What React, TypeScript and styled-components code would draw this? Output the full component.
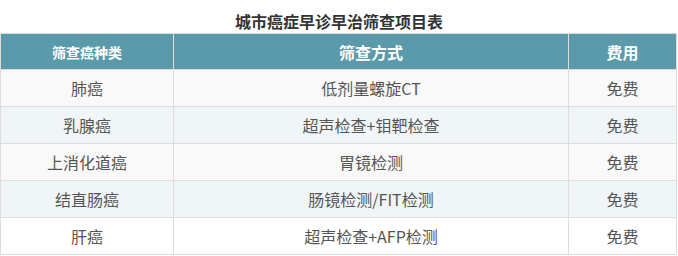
import React from 'react'
import styled, { createGlobalStyle } from 'styled-components'

const GlobalStyle = createGlobalStyle`
  body {
    margin: 0;
    background: #fff;
    font-family: "Noto Sans CJK SC", "Noto Sans", sans-serif;
  }
`

const Wrapper = styled.div`
  width: 678px;
`

const Title = styled.h3`
  margin: 0;
  padding-top: 10px;
  height: 23px;
  line-height: 22px;
  font-size: 16px;
  font-weight: bold;
  color: #333;
  text-align: center;
`

const Table = styled.table`
  width: 677px;
  border-collapse: collapse;
  table-layout: fixed;
`

const HeadCell = styled.th<{ $small?: boolean }>`
  height: 35px;
  padding: 0;
  background: #5a9aab;
  color: #fff;
  font-size: ${p => (p.$small ? '14px' : '16px')};
  font-weight: bold;
  border: 1px solid #dcdcdc;
  text-align: center;
`

const Row = styled.tr<{ $bg: string }>`
  background: ${p => p.$bg};
`

const Cell = styled.td`
  height: 36px;
  padding: 0;
  font-size: 16px;
  color: #555;
  border: 1px solid #dcdcdc;
  text-align: center;
`

const rows = [
  ['肺癌', '低剂量螺旋CT', '免费'],
  ['乳腺癌', '超声检查+钼靶检查', '免费'],
  ['上消化道癌', '胃镜检测', '免费'],
  ['结直肠癌', '肠镜检测/FIT检测', '免费'],
  ['肝癌', '超声检查+AFP检测', '免费'],
]

const backgrounds = ['#f9f9f9', '#f0f5f8', '#f9f9f9', '#f0f5f8', '#ffffff']

export default function App() {
  return (
    <Wrapper>
      <GlobalStyle />
      <Title>城市癌症早诊早治筛查项目表</Title>
      <Table>
        <colgroup>
          <col style={{ width: 173 }} />
          <col style={{ width: 395 }} />
          <col />
        </colgroup>
        <thead>
          <tr>
            <HeadCell $small>筛查癌种类</HeadCell>
            <HeadCell>筛查方式</HeadCell>
            <HeadCell>费用</HeadCell>
          </tr>
        </thead>
        <tbody>
          {rows.map((r, i) => (
            <Row key={r[0]} $bg={backgrounds[i]}>
              <Cell>{r[0]}</Cell>
              <Cell>{r[1]}</Cell>
              <Cell>{r[2]}</Cell>
            </Row>
          ))}
        </tbody>
      </Table>
    </Wrapper>
  )
}
